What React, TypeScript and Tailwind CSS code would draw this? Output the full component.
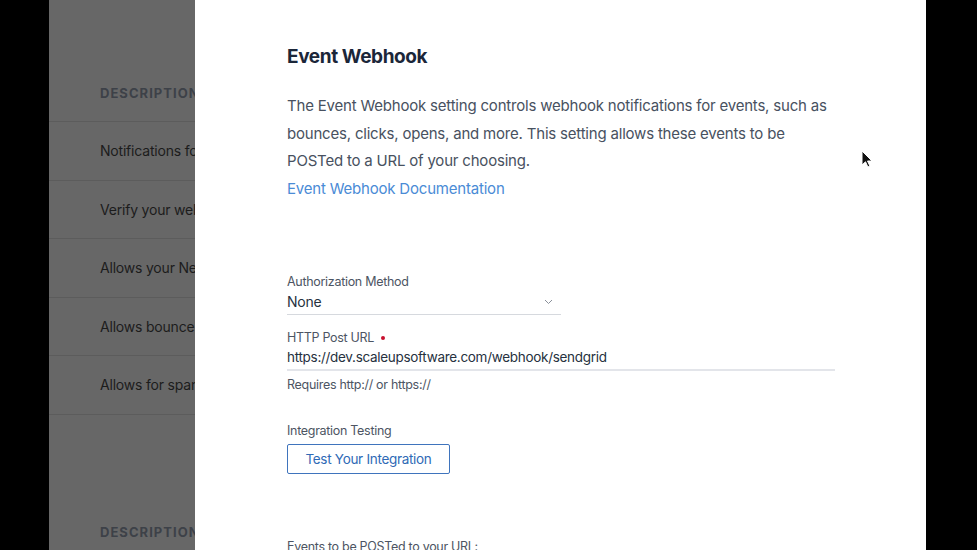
export default function App() {
  const rows = [
    "Notifications fo",
    "Verify your web",
    "Allows your Ne",
    "Allows bounce",
    "Allows for spam",
  ];

  return (
    <main
      className="flex h-[550px] w-[977px] overflow-hidden bg-black"
      style={{ fontFamily: "Inter, 'Noto Sans', sans-serif" }}
    >
      {/* left letterbox */}
      <div className="w-[49px] shrink-0 bg-black" />

      {/* dimmed page behind the drawer */}
      <div className="relative w-[146px] shrink-0 overflow-hidden bg-[#676767]">
        <div className="w-[400px] pt-[84px]">
          <div className="h-[38px] border-b border-[#5c5c5c] pl-[51px] text-[13px] font-bold tracking-[0.08em] text-[#3d4148]">
            DESCRIPTION
          </div>
          {rows.map((r) => (
            <div
              key={r}
              className="flex h-[58.5px] items-center border-b border-[#5c5c5c] pl-[51px] text-[14px] tracking-[-0.2px] text-[#1c1c1c]"
            >
              {r}
            </div>
          ))}
          <div className="pl-[51px] pt-[108px] text-[13px] font-bold tracking-[0.08em] text-[#3d4148]">
            DESCRIPTION
          </div>
        </div>
      </div>

      {/* drawer */}
      <section className="relative w-[731px] shrink-0 overflow-hidden bg-white pl-[92px] pr-[91px] pt-[44px] tracking-[-0.2px]">
        <h1 className="text-[19px] font-bold leading-[26px] tracking-[-0.4px] text-[#1b2639]">
          Event Webhook
        </h1>
        <p className="mt-[22px] text-[15px] leading-[27.5px] tracking-[-0.2px] text-[#485160]">
          The Event Webhook setting controls webhook notifications for events, such as
          bounces, clicks, opens, and more. This setting allows these events to be
          POSTed to a URL of your choosing.
        </p>
        <a className="block text-[15px] leading-[27px] tracking-[-0.2px] text-[#4a8bd6]">
          Event Webhook Documentation
        </a>

        <div className="mt-[72px] w-[274px]">
          <div className="text-[12.5px] leading-[16px] tracking-[-0.3px] text-[#4d5563]">Authorization Method</div>
          <div className="flex h-[25px] items-center justify-between border-b border-[#d6d9de] pr-[8px] text-[14px] text-[#263140]">
            <span>None</span>
            <svg width="9" height="6" viewBox="0 0 9 6" fill="none">
              <path d="M1 1l3.5 3.5L8 1" stroke="#8a909a" strokeWidth="1" />
            </svg>
          </div>
        </div>

        <div className="mt-[15px] w-[548px]">
          <div className="flex items-center gap-[7px] text-[12.5px] leading-[16px] tracking-[-0.3px] text-[#4d5563]">
            HTTP Post URL
            <span className="h-[4px] w-[4px] rounded-full bg-[#c8102e]" />
          </div>
          <div className="flex h-[25px] items-center border-b-2 border-[#e3e5ea] text-[13.5px] tracking-[-0.3px] text-[#263140]">
            https://dev.scaleupsoftware.com/webhook/sendgrid
          </div>
          <div className="mt-[5px] text-[12.5px] tracking-[-0.3px] text-[#4d5563]">Requires http:// or https://</div>
        </div>

        <div className="mt-[29px] text-[12.5px] leading-[16px] tracking-[-0.3px] text-[#4d5563]">Integration Testing</div>
        <button className="mt-[5px] h-[30px] w-[163px] rounded-[2px] border border-[#3f74bd] text-[13.5px] tracking-[-0.3px] text-[#2f6ab6]">
          Test Your Integration
        </button>

        <div className="mt-[64px] text-[12.5px] tracking-[-0.3px] text-[#4d5563]">Events to be POSTed to your URL:</div>

        {/* mouse pointer */}
        <svg
          className="absolute left-[666px] top-[150px]"
          width="12"
          height="18"
          viewBox="0 0 12 18"
        >
          <path d="M1 1v14l3.5-3.2 2.4 5.2 2-1-2.4-5H11z" fill="#111" stroke="#fff" strokeWidth="1" />
        </svg>
      </section>

      {/* right letterbox */}
      <div className="flex-1 bg-black" />
    </main>
  );
}
